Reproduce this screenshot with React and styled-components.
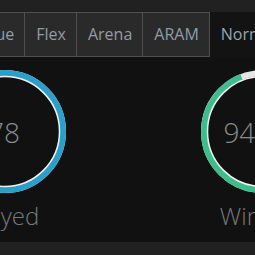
import styled, { createGlobalStyle } from 'styled-components';

const GlobalStyle = createGlobalStyle`
  html, body {
    margin: 0;
    padding: 0;
    background: #111111;
    overflow: hidden;
  }
  body {
    font-family: 'Open Sans', 'Liberation Sans', sans-serif;
  }
`;

const Page = styled.div`
  width: 255px;
  height: 255px;
  display: flex;
  flex-direction: column;
  background: #111111;
  overflow: hidden;
`;

const TopStrip = styled.div`
  height: 12px;
  background: #212121;
  flex-shrink: 0;
`;

const TabRow = styled.div`
  display: flex;
  height: 45px;
  flex-shrink: 0;
  margin-left: -83px;
`;

const Tab = styled.div`
  display: flex;
  align-items: center;
  padding: 0 10px 1px 11px;
  font-size: 16px;
  color: ${(p) => (p.$active ? '#9aa3ab' : '#929ca6')};
  background: ${(p) => (p.$active ? '#131313' : '#2a2a2a')};
  border-top: 1px solid ${(p) => (p.$active ? '#131313' : '#4f4f4f')};
  border-bottom: 1px solid ${(p) => (p.$active ? '#131313' : '#4f4f4f')};
  border-right: 1px solid ${(p) => (p.$active ? '#131313' : '#4f4f4f')};
  white-space: nowrap;
  box-sizing: border-box;
`;

const Content = styled.div`
  flex: 1;
  display: flex;
  margin-left: -125px;
  padding-top: 13px;
`;

const Card = styled.div`
  width: 258px;
  flex-shrink: 0;
  display: flex;
  flex-direction: column;
  align-items: center;
`;

const Ring = styled.div`
  position: relative;
  width: 123px;
  height: 123px;
  display: flex;
  align-items: center;
  justify-content: center;
`;

const RingSvg = styled.svg`
  position: absolute;
  inset: 0;
`;

const Value = styled.span`
  position: relative;
  font-size: 28px;
  font-weight: 300;
  color: #8a8a8a;
`;

const Label = styled.div`
  margin-top: 7px;
  font-size: 24px;
  font-weight: 300;
  color: #787878;
  line-height: 32px;
`;

function StatRing({ value, label, color, percent }) {
  const r = 58.5;
  const c = 2 * Math.PI * r;
  return (
    <Card>
      <Ring>
        <RingSvg width="123" height="123" viewBox="0 0 123 123">
          <circle cx="61.5" cy="61.5" r={r} fill="none" stroke="#e6e6e6" strokeWidth="6" />
          <circle
            cx="61.5"
            cy="61.5"
            r={r}
            fill="none"
            stroke={color}
            strokeWidth="6"
            strokeDasharray={`${(c * percent) / 100} ${c}`}
            transform="rotate(-90 61.5 61.5)"
          />
          <circle cx="61.5" cy="61.5" r="55" fill="none" stroke="#f2f2f2" strokeWidth="1.5" />
        </RingSvg>
        <Value>{value}</Value>
      </Ring>
      <Label>{label}</Label>
    </Card>
  );
}

const BottomStrip = styled.div`
  height: 13px;
  background: #212121;
  flex-shrink: 0;
`;

export default function App() {
  return (
    <>
      <GlobalStyle />
      <Page>
        <TopStrip />
        <TabRow>
          <Tab>Solo Queue</Tab>
          <Tab>Flex</Tab>
          <Tab>Arena</Tab>
          <Tab>ARAM</Tab>
          <Tab $active>Normal</Tab>
        </TabRow>
        <Content>
          <StatRing value="78" label="Played" color="#2a9fc9" percent={100} />
          <StatRing value="94.4%" label="Winrate" color="#3dbd8b" percent={94} />
        </Content>
        <BottomStrip />
      </Page>
    </>
  );
}
